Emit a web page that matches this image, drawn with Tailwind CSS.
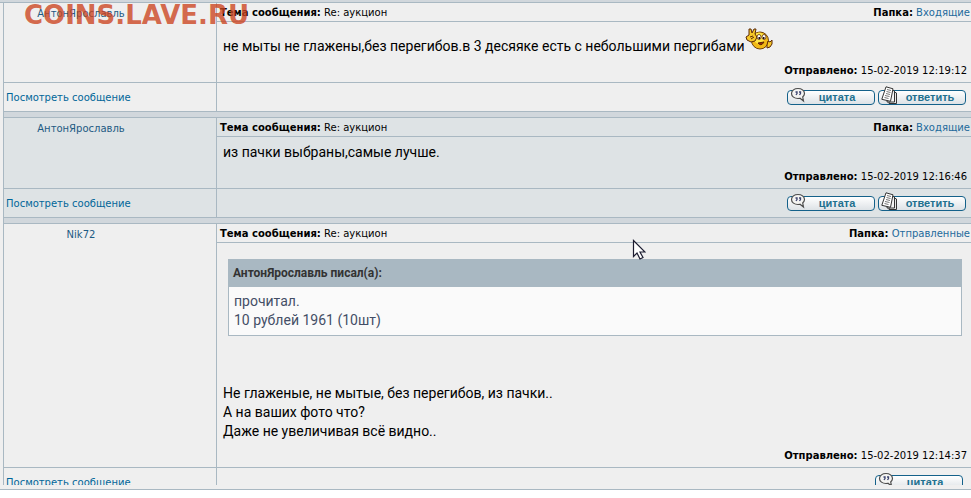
<!DOCTYPE html>
<html lang="ru">
    <head>
        <meta charset="UTF-8" />
        <meta name="viewport" content="width=device-width, initial-scale=1.0" />
        <title>Личные сообщения</title>
        <script src="https://cdn.jsdelivr.net/npm/@tailwindcss/browser@4"></script>
    </head>
    <body class="bg-white text-black text-[10px] leading-4 font-['DejaVu_Sans',Verdana,sans-serif]">
        <!-- shared button artwork -->
        <svg class="hidden">
            <symbol id="icon-quote" viewBox="0 0 16 16">
                <path d="M8 1.500C4.500 1.500 1.500 3.500 1.500 6.500S4.500 11.500 8 11.500c1 0 1.500 0 2-.2l3.500 2.700-.8-4c1-1 1.800-2 1.800-3.500C14.500 3.500 11.500 1.500 8 1.500z" fill="#f4f4f2" stroke="#4c4c4c" stroke-width="1.200" />
                <path d="M5.500 5H7v1.500L6 8M9 5h1.500v1.500L9.500 8" fill="none" stroke="#3d4470" stroke-width="1.300" />
            </symbol>
            <symbol id="icon-reply" viewBox="0 0 17 19">
                <path d="M9 4l6.500 3v10.500H8z" fill="#e8e8e8" stroke="#333" />
                <path d="M8 3l5.500 2v11H6z" fill="#f4f4f4" stroke="#333" />
                <path d="M5 .8l7 2-2.500 12.500-8.700-2z" fill="#fff" stroke="#333" />
                <path d="M6 3.500l4 1M5.500 5.500l4 1M5 7.500l4 1M4 9.500l4.500 1M3.500 11.500l4 1" stroke="#666" stroke-width=".9" />
            </symbol>
        </svg>

        <main class="relative border-b border-[#a9b8c2] bg-[#efefef] pb-1">
            <div class="h-[3px] border-b border-[#a9b8c2] bg-[#d1d7dc]"></div>

            <article class="ml-[3px] grid grid-cols-[213px_minmax(0,1fr)] border-l border-[#a9b8c2] bg-[#efefef]">
                <div class="border-r border-b border-[#a9b8c2] pt-[3px]">
                    <a href="#" class="block w-[154px] text-center text-[#1d5a83]">АнтонЯрославль</a>
                </div>
                <div class="flex flex-col border-b border-[#a9b8c2]">
                    <header class="flex h-[19px] justify-between border-b border-[#a9b8c2] pt-[2px] pr-px pl-[3px]">
                        <p><b>Тема сообщения:</b> Re: аукцион</p>
                        <p><b>Папка:</b> <a href="#" class="text-[#1d6a9c]">Входящие</a></p>
                    </header>
                    <div class="flex h-[41px] items-start pt-[6px] pl-[6px] font-[Roboto,'Noto_Sans',sans-serif] text-[14px] leading-[19px]">
                        <p class="pt-[9px]">не мыты не глажены,без перегибов.в 3 десяяке есть с небольшими пергибами</p>
                        <svg class="h-[22px] w-[28px]" viewBox="0 0 28 22">
                            <circle cx="15" cy="12.500" r="8.500" fill="#f2b916" stroke="#704008" />
                            <circle cx="14" cy="10" r="5.500" fill="#ffe545" />
                            <path d="M4 1h2l1 4 2-4h2l-1 5 2 3-2 4-4 1-4-2-1-3 3-2z" fill="#f6c828" stroke="#5b2807" />
                            <path d="M5 9l3-1M6 11l3-2" stroke="#5b2807" />
                            <path d="M22 17l1-4 2 1 2-2v4l-2 3-3 1z" fill="#f6c828" stroke="#5b2807" />
                            <ellipse cx="14" cy="9" rx="2" ry="2.500" fill="#fff" stroke="#5b2807" stroke-width=".8" />
                            <ellipse cx="19" cy="9" rx="2" ry="2.500" fill="#fff" stroke="#5b2807" stroke-width=".8" />
                            <path d="M13.500 10h1.500M18 10h1.500" stroke="#201008" stroke-width="2" />
                            <path d="M13 15q3 4 6-1z" fill="#a02a0a" stroke="#5b2807" />
                        </svg>
                    </div>
                    <p class="pr-1 pb-[3px] text-right"><b>Отправлено:</b> 15-02-2019 12:19:12</p>
                </div>
                <div class="h-[29px] border-r border-b border-[#a9b8c2] pt-[7px] pl-[2px]">
                    <a href="#" class="text-[#006699]">Посмотреть сообщение</a>
                </div>
                <div class="flex items-start justify-end gap-[3px] border-b border-[#a9b8c2] pt-[7px] pr-[5px]">
                    <button class="relative h-[15px] w-[88px] rounded-[4px] border border-[#14618a] bg-gradient-to-b from-white to-[#dde2e6] pl-3 text-center font-['Liberation_Sans',Arial,sans-serif] text-[11px] leading-[13px] font-bold text-[#21708f]">
                        <svg class="absolute -top-1 left-[2px] size-4"><use href="#icon-quote" /></svg>
                        цитата
                    </button>
                    <button class="relative h-[15px] w-[88px] rounded-[4px] border border-[#14618a] bg-gradient-to-b from-white to-[#dde2e6] pl-4 text-center font-['Liberation_Sans',Arial,sans-serif] text-[11px] leading-[13px] font-bold text-[#21708f]">
                        <svg class="absolute -top-[5px] left-[2px] h-[19px] w-[17px]"><use href="#icon-reply" /></svg>
                        ответить
                    </button>
                </div>
            </article>

            <div class="ml-[3px] h-[6px] border-b border-l border-[#a9b8c2] bg-[#d1d7dc]"></div>

            <article class="ml-[3px] grid grid-cols-[213px_minmax(0,1fr)] border-l border-[#a9b8c2] bg-[#dee3e5]">
                <div class="border-r border-b border-[#a9b8c2] pt-[3px]">
                    <a href="#" class="block w-[154px] text-center text-[#1d5a83]">АнтонЯрославль</a>
                </div>
                <div class="flex flex-col border-b border-[#a9b8c2]">
                    <header class="flex h-[19px] justify-between border-b border-[#a9b8c2] pt-[2px] pr-px pl-[3px]">
                        <p><b>Тема сообщения:</b> Re: аукцион</p>
                        <p><b>Папка:</b> <a href="#" class="text-[#1d6a9c]">Входящие</a></p>
                    </header>
                    <p class="h-[32px] pt-[6px] pl-[6px] font-[Roboto,'Noto_Sans',sans-serif] text-[14px] leading-[19px]">из пачки выбраны,самые лучше.</p>
                    <p class="pr-1 pb-[3px] text-right"><b>Отправлено:</b> 15-02-2019 12:16:46</p>
                </div>
                <div class="h-[29px] border-r border-b border-[#a9b8c2] pt-[7px] pl-[2px]">
                    <a href="#" class="text-[#006699]">Посмотреть сообщение</a>
                </div>
                <div class="flex items-start justify-end gap-[3px] border-b border-[#a9b8c2] pt-[7px] pr-[5px]">
                    <button class="relative h-[15px] w-[88px] rounded-[4px] border border-[#14618a] bg-gradient-to-b from-white to-[#dde2e6] pl-3 text-center font-['Liberation_Sans',Arial,sans-serif] text-[11px] leading-[13px] font-bold text-[#21708f]">
                        <svg class="absolute -top-1 left-[2px] size-4"><use href="#icon-quote" /></svg>
                        цитата
                    </button>
                    <button class="relative h-[15px] w-[88px] rounded-[4px] border border-[#14618a] bg-gradient-to-b from-white to-[#dde2e6] pl-4 text-center font-['Liberation_Sans',Arial,sans-serif] text-[11px] leading-[13px] font-bold text-[#21708f]">
                        <svg class="absolute -top-[5px] left-[2px] h-[19px] w-[17px]"><use href="#icon-reply" /></svg>
                        ответить
                    </button>
                </div>
            </article>

            <div class="ml-[3px] h-[6px] border-b border-l border-[#a9b8c2] bg-[#d1d7dc]"></div>

            <article class="ml-[3px] grid grid-cols-[213px_minmax(0,1fr)] border-l border-[#a9b8c2] bg-[#efefef]">
                <div class="border-r border-b border-[#a9b8c2] pt-[3px]">
                    <a href="#" class="block w-[154px] text-center text-[#1d5a83]">Nik72</a>
                </div>
                <div class="flex flex-col border-b border-[#a9b8c2]">
                    <header class="flex h-[19px] justify-between border-b border-[#a9b8c2] pt-[2px] pr-px pl-[3px]">
                        <p><b>Тема сообщения:</b> Re: аукцион</p>
                        <p><b>Папка:</b> <a href="#" class="text-[#1d6a9c]">Отправленные</a></p>
                    </header>
                    <div class="pt-4 font-[Roboto,'Noto_Sans',sans-serif] text-[14px] leading-[19px]">
                        <blockquote class="mr-[9px] ml-[11px] border border-[#a9b8c2] bg-[#fafafa] text-[#444e66]">
                            <p class="h-[27px] bg-[#a9b8c2] pt-1 pl-1 text-[12px] font-bold text-[#333]">АнтонЯрославль писал(а):</p>
                            <p class="px-[5px] py-[5px]">прочитал.<br />10 рублей 1961 (10шт)</p>
                        </blockquote>
                        <p class="pt-12 pb-[7px] pl-[6px]">Не глаженые, не мытые, без перегибов, из пачки..<br />А на ваших фото что?<br />Даже не увеличивая всё видно..</p>
                    </div>
                    <p class="pr-1 pb-[3px] text-right"><b>Отправлено:</b> 15-02-2019 12:14:37</p>
                </div>
                <!-- the last row is cut off by the frame -->
                <div class="h-[17px] overflow-hidden border-r border-[#a9b8c2] pt-[7px] pl-[2px]">
                    <a href="#" class="text-[#006699]">Посмотреть сообщение</a>
                </div>
                <div class="flex h-[17px] items-start justify-end overflow-hidden pt-[7px] pr-2">
                    <button class="relative h-[15px] w-[88px] rounded-[4px] border border-[#14618a] bg-gradient-to-b from-white to-[#dde2e6] pl-3 text-center font-['Liberation_Sans',Arial,sans-serif] text-[11px] leading-[13px] font-bold text-[#21708f]">
                        <svg class="absolute -top-1 left-[2px] size-4"><use href="#icon-quote" /></svg>
                        цитата
                    </button>
                </div>
            </article>

            <!-- watermark -->
            <div class="absolute top-px left-6 text-[26px] leading-[29px] font-bold text-[#cc4420]/80">COINS.LAVE.RU</div>

            <!-- mouse pointer -->
            <svg class="absolute top-[239px] left-[632px] h-[21px] w-[14px]" viewBox="0 0 14 21">
                <path d="M1.500 1.500v16l3.500-3.500 3 6 3-1.500-3-5.500h5z" fill="#fff" stroke="#1c1c30" stroke-width="1.200" />
            </svg>
        </main>
    </body>
</html>
